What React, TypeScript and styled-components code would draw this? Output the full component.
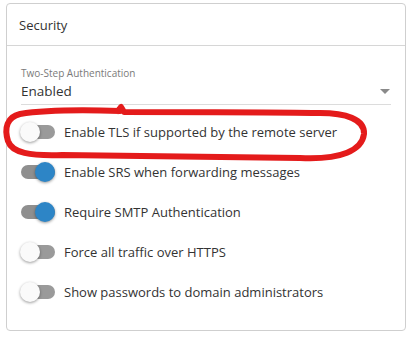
import styled, { createGlobalStyle } from "styled-components";

const GlobalStyle = createGlobalStyle`
    html, body {
        margin: 0;
        padding: 0;
        background: #fff;
    }
    body {
        font-family: "Open Sans", "Noto Sans", sans-serif;
        color: #333;
    }
`;

const Page = styled.div`
    position: relative;
    width: 416px;
    height: 338px;
    padding: 3px 10px 0 6px;
    box-sizing: border-box;
`;

const Card = styled.section`
    width: 400px;
    height: 328px;
    box-sizing: border-box;
    border: 1px solid #cfcfcf;
    border-radius: 4px;
    background: #fff;
`;

const CardHeader = styled.div`
    height: 40px;
    padding: 1px 12px 0;
    display: flex;
    align-items: center;
    border-bottom: 1px solid #d6d6d6;
    font-size: 13px;
    color: #333;
`;

const CardBody = styled.div`
    padding: 20px 13px 0 14px;
`;

const Field = styled.div`
    width: 370px;
    border-bottom: 1px solid #dcdcdc;
    padding-bottom: 2px;
`;

const FieldLabel = styled.div`
    font-size: 10px;
    line-height: 14px;
    color: #7a7a7a;
`;

const SelectRow = styled.div`
    display: flex;
    align-items: center;
    justify-content: space-between;
    font-size: 13.5px;
    line-height: 22px;
    color: #333;
`;

const Caret = styled.span`
    width: 0;
    height: 0;
    margin-right: 1px;
    border-left: 5px solid transparent;
    border-right: 5px solid transparent;
    border-top: 5px solid #8a8a8a;
`;

const ToggleList = styled.ul`
    list-style: none;
    margin: 7px 0 0;
    padding: 0;
    display: flex;
    flex-direction: column;
`;

const ToggleRow = styled.li`
    height: 40px;
    display: flex;
    align-items: center;
    gap: 9px;
    font-size: 13px;
    color: #333;
`;

const Track = styled.span<{ on: boolean }>`
    position: relative;
    width: 34px;
    height: 14px;
    border-radius: 7px;
    background: ${({ on }) => (on ? "#8f8f8f" : "#9a9a9a")};
    flex-shrink: 0;
`;

const Thumb = styled.span<{ on: boolean }>`
    position: absolute;
    top: -3px;
    left: ${({ on }) => (on ? "14px" : "-1px")};
    width: 20px;
    height: 20px;
    border-radius: 50%;
    background: ${({ on }) => (on ? "#2d85c6" : "#fafafa")};
    box-shadow: 0 1px 3px rgba(0, 0, 0, 0.4);
`;

const Scribble = styled.svg`
    position: absolute;
    left: 0;
    top: 0;
    pointer-events: none;
`;

const toggles = [
    { label: "Enable TLS if supported by the remote server", on: false },
    { label: "Enable SRS when forwarding messages", on: true },
    { label: "Require SMTP Authentication", on: true },
    { label: "Force all traffic over HTTPS", on: false },
    { label: "Show passwords to domain administrators", on: false },
];

export default function App() {
    return (
        <>
            <GlobalStyle />
            <Page>
                <Card>
                    <CardHeader>Security</CardHeader>
                    <CardBody>
                        <Field>
                            <FieldLabel>Two-Step Authentication</FieldLabel>
                            <SelectRow>
                                Enabled
                                <Caret />
                            </SelectRow>
                        </Field>
                        <ToggleList>
                            {toggles.map((t) => (
                                <ToggleRow key={t.label}>
                                    <Track on={t.on}>
                                        <Thumb on={t.on} />
                                    </Track>
                                    {t.label}
                                </ToggleRow>
                            ))}
                        </ToggleList>
                    </CardBody>
                </Card>
                {/* red marker circle drawn over the first option */}
                <Scribble width="416" height="338" viewBox="0 0 416 338">
                    <path
                        d="M 120 111 C 90 110, 45 110, 20 114 C 7 117, 4 128, 8 141 C 12 153, 30 156, 62 155 L 300 158 C 342 160, 362 150, 364 134 C 365 119, 345 113, 320 113 C 260 112, 180 112, 124 112 L 121 107 L 118 111"
                        fill="none"
                        stroke="#e41b1b"
                        strokeWidth="6"
                        strokeLinecap="round"
                        strokeLinejoin="round"
                    />
                </Scribble>
            </Page>
        </>
    );
}
